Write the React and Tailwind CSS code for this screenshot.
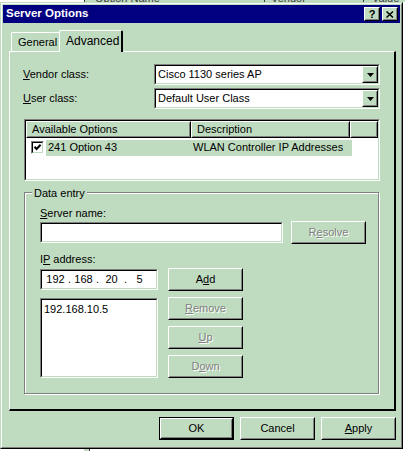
const face = "bg-[#c0dcc0]";

/* -------------------- 3D PIECES -------------------- */
const Raised = ({ className = "", children, def }) => (
  <div className={`${def ? "border border-black" : ""} ${className}`}>
    <div className="h-full w-full border border-t-white border-l-white border-r-black border-b-black">
      <div className="flex h-full w-full items-center justify-center border border-t-[#c0dcc0] border-l-[#c0dcc0] border-r-[#808080] border-b-[#808080] bg-[#c0dcc0]">
        {children}
      </div>
    </div>
  </div>
);

const Sunken = ({ className = "", children }) => (
  <div className={`border border-t-[#808080] border-l-[#808080] border-r-white border-b-white ${className}`}>
    <div className="h-full w-full border border-t-black border-l-black border-r-[#c0dcc0] border-b-[#c0dcc0] bg-white">
      {children}
    </div>
  </div>
);

const Dis = ({ children }) => (
  <span className="text-[#808080] [text-shadow:1px_1px_0_#ffffff]">{children}</span>
);

const Combo = ({ value }) => (
  <Sunken className="h-[21px] w-[226px]">
    <div className="flex h-full items-center">
      <span className="flex-1 pl-[2px] leading-none">{value}</span>
      <Raised className="h-full w-[16px]">
        <svg width="7" height="4" viewBox="0 0 7 4">
          <polygon points="0,0 7,0 3.5,4" fill="#000" />
        </svg>
      </Raised>
    </div>
  </Sunken>
);

const Checkbox = () => (
  <Sunken className="h-[13px] w-[13px]">
    <svg width="9" height="9" viewBox="0 0 9 9" className="block">
      <path d="M1.5 3.8 L3.6 6 L7.6 1.8" stroke="#000" strokeWidth="2" fill="none" />
    </svg>
  </Sunken>
);

/* -------------------- DIALOG -------------------- */
export default function App() {
  return (
    <div className="relative h-[451px] w-[405px] overflow-hidden bg-white font-['Liberation_Sans',Arial,sans-serif] text-[11px] text-black">
      {/* window underneath: bit of list header */}
      <div className="flex h-[2px] overflow-hidden">
        <div className="w-[84px] bg-white" />
        <div className={`flex flex-1 ${face}`}>
          <div className="relative w-[180px] border-l border-[#404040]">
            <span className="absolute -top-[10px] left-[10px] text-[#404040]">Option Name</span>
          </div>
          <div className="relative w-[99px] border-l border-[#404040]">
            <span className="absolute -top-[10px] left-[6px] text-[#404040]">Vendor</span>
          </div>
          <div className="relative flex-1 border-l border-[#404040]">
            <span className="absolute -top-[10px] left-[8px] text-[#404040]">Value</span>
          </div>
        </div>
      </div>

      {/* dialog frame */}
      <div className="h-[447px] w-[403px] border border-t-[#c0dcc0] border-l-[#c0dcc0] border-r-black border-b-black">
        <div className="h-full w-full border border-t-white border-l-white border-r-[#808080] border-b-[#808080] bg-[#c0dcc0] p-[1px]">
          {/* title bar */}
          <div className="flex h-[18px] items-center bg-[#000080] pl-[3px] pr-[2px]">
            <span className="flex-1 text-[11.5px] font-bold text-white">Server Options</span>
            <Raised className="h-[14px] w-[16px]">
              <span className="text-[11px] font-bold leading-none">?</span>
            </Raised>
            <Raised className="ml-[2px] h-[14px] w-[16px]">
              <svg width="8" height="7" viewBox="0 0 8 7">
                <path d="M0.5 0.5 L7 6.5 M7 0.5 L0.5 6.5" stroke="#000" strokeWidth="1.5" />
              </svg>
            </Raised>
          </div>

          {/* body */}
          <div className="pl-[6px] pt-[7px]">
            {/* tabs */}
            <div className="flex h-[21px] items-start pl-[2px]">
              <div className="mt-[2px] flex h-[19px] w-[48px] items-center rounded-tl-[2px] border-l border-t border-white pl-[6px]">
                General
              </div>
              <div className="relative z-10 flex h-[22px] w-[64px] items-center rounded-t-[2px] border-l border-t border-r-2 border-t-white border-l-white border-r-black bg-[#c0dcc0] pl-[6px] pb-[1px] text-[12px]">
                Advanced
              </div>
            </div>

            {/* tab panel */}
            <div className="h-[360px] w-[387px] border-l border-t border-r-2 border-b-2 border-t-white border-l-white border-r-black border-b-black">
              <div className="h-full w-full pl-[13px] pt-[12px]">
                <div className="flex h-[21px] items-center">
                  <span className="w-[131px]"><u>V</u>endor class:</span>
                  <Combo value="Cisco 1130 series AP" />
                </div>
                <div className="mt-[3px] flex h-[21px] items-center">
                  <span className="w-[131px]"><u>U</u>ser class:</span>
                  <Combo value="Default User Class" />
                </div>

                {/* options list */}
                <Sunken className="ml-[1px] mt-[10px] h-[62px] w-[356px]">
                  <div className="flex h-[17px]">
                    <Raised className="h-full w-[165px]">
                      <span className="w-full pl-[4px]">Available Options</span>
                    </Raised>
                    <Raised className="h-full w-[159px]">
                      <span className="w-full pl-[4px]">Description</span>
                    </Raised>
                    <Raised className="h-full flex-1" />
                  </div>
                  <div className="mt-[1px] flex h-[17px] items-center pl-[5px]">
                    <Checkbox />
                    <div className={`ml-[2px] flex h-[16px] w-[306px] items-center ${face}`}>
                      <span className="w-[147px] pl-[2px]">241 Option 43</span>
                      <span>WLAN Controller IP Addresses</span>
                    </div>
                  </div>
                </Sunken>

                {/* data entry group */}
                <div className="relative ml-[1px] mt-[11px] h-[202px] w-[355px] border border-[#808080] shadow-[inset_1px_1px_0_#ffffff,1px_1px_0_#ffffff] pl-[15px] pt-[14px]">
                  <span className={`absolute -top-[8px] left-[7px] px-[2px] ${face}`}>Data entry</span>

                  <div className="h-[13px] leading-[13px]"><u>S</u>erver name:</div>
                  <div className="mt-[1px] flex items-center">
                    <Sunken className="h-[21px] w-[243px]" />
                    <Raised className="ml-[8px] h-[23px] w-[75px]">
                      <Dis>R<u>e</u>solve</Dis>
                    </Raised>
                  </div>

                  <div className="mt-[9px] h-[13px] leading-[13px]">I<u>P</u> address:</div>
                  <div className="mt-[2px] flex items-center">
                    <Sunken className="h-[21px] w-[118px]">
                      <div className="flex h-full items-center pl-[3px]">
                        <span className="w-[21px] text-center">192</span>
                        <span className="w-[7px] text-center">.</span>
                        <span className="w-[21px] text-center">168</span>
                        <span className="w-[7px] text-center">.</span>
                        <span className="w-[21px] text-center">20</span>
                        <span className="w-[7px] text-center">.</span>
                        <span className="w-[21px] text-center">5</span>
                      </div>
                    </Sunken>
                    <Raised className="ml-[10px] h-[23px] w-[75px]">
                      <span>A<u>d</u>d</span>
                    </Raised>
                  </div>

                  <div className="mt-[6px] flex items-start">
                    <Sunken className="mt-[1px] h-[80px] w-[118px]">
                      <div className="pl-[2px] pt-[1px]">192.168.10.5</div>
                    </Sunken>
                    <div className="ml-[10px] flex flex-col gap-[6px]">
                      <Raised className="h-[23px] w-[75px]">
                        <Dis><u>R</u>emove</Dis>
                      </Raised>
                      <Raised className="h-[23px] w-[75px]">
                        <Dis><u>U</u>p</Dis>
                      </Raised>
                      <Raised className="h-[23px] w-[75px]">
                        <Dis>D<u>o</u>wn</Dis>
                      </Raised>
                    </div>
                  </div>
                </div>
              </div>
            </div>

            {/* dialog buttons */}
            <div className="mt-[6px] flex w-[387px] justify-end gap-[6px]">
              <Raised def className="h-[23px] w-[75px]">
                <span>OK</span>
              </Raised>
              <Raised className="h-[23px] w-[75px]">
                <span>Cancel</span>
              </Raised>
              <Raised className="h-[23px] w-[75px]">
                <span><u>A</u>pply</span>
              </Raised>
            </div>
          </div>
        </div>
      </div>

      {/* window underneath: bottom edge */}
      <div className="absolute bottom-0 left-[84px] h-[2px] w-[6px] border-r border-[#404040] bg-[#c0dcc0]" />
    </div>
  );
}
